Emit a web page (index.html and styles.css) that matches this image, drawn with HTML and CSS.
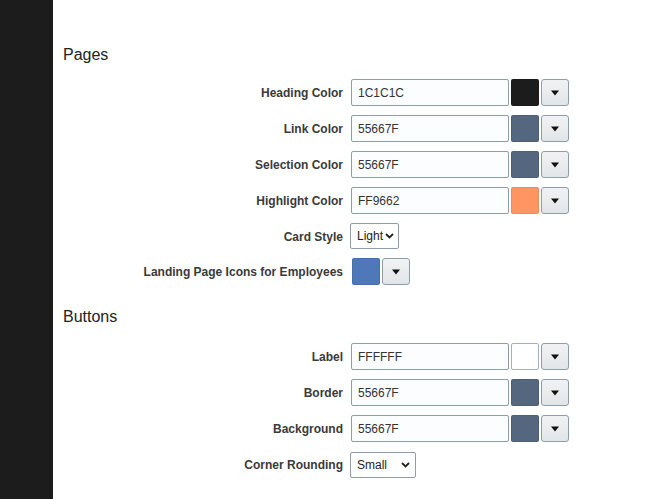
FILE: index.html
```html
<!DOCTYPE html>
<html>
<head>
<meta charset="utf-8">
<link rel="stylesheet" href="styles.css">
</head>
<body>
<div class="app">
  <aside class="sidebar"></aside>
  <main class="main">
    <h2 class="section-title first">Pages</h2>
    <div class="form">
      <label class="lbl">Heading Color</label>
      <div class="ctrl"><input class="hex" value="1C1C1C"><span class="swatch" style="background:#1c1c1c"></span><button class="drop"><svg width="10" height="6" viewBox="0 0 10 6"><path d="M1 0.5h8L5 5.5z" fill="#111"/></svg></button></div>
      <label class="lbl">Link Color</label>
      <div class="ctrl"><input class="hex" value="55667F"><span class="swatch" style="background:#55667f"></span><button class="drop"><svg width="10" height="6" viewBox="0 0 10 6"><path d="M1 0.5h8L5 5.5z" fill="#111"/></svg></button></div>
      <label class="lbl">Selection Color</label>
      <div class="ctrl"><input class="hex" value="55667F"><span class="swatch" style="background:#55667f"></span><button class="drop"><svg width="10" height="6" viewBox="0 0 10 6"><path d="M1 0.5h8L5 5.5z" fill="#111"/></svg></button></div>
      <label class="lbl">Highlight Color</label>
      <div class="ctrl"><input class="hex" value="FF9662"><span class="swatch" style="background:#ff9662"></span><button class="drop"><svg width="10" height="6" viewBox="0 0 10 6"><path d="M1 0.5h8L5 5.5z" fill="#111"/></svg></button></div>
      <label class="lbl short">Card Style</label>
      <div class="ctrl short"><div class="select w-light"><span>Light</span><svg width="9" height="6" viewBox="0 0 9 6"><path d="M1 1l3.5 3.5L8 1" fill="none" stroke="#222" stroke-width="1.8"/></svg></div></div>
      <label class="lbl">Landing Page Icons for Employees</label>
      <div class="ctrl"><span class="swatch solo" style="background:#4f78b9"></span><button class="drop"><svg width="10" height="6" viewBox="0 0 10 6"><path d="M1 0.5h8L5 5.5z" fill="#111"/></svg></button></div>
    </div>
    <h2 class="section-title second">Buttons</h2>
    <div class="form">
      <label class="lbl">Label</label>
      <div class="ctrl"><input class="hex" value="FFFFFF"><span class="swatch white" style="background:#ffffff"></span><button class="drop"><svg width="10" height="6" viewBox="0 0 10 6"><path d="M1 0.5h8L5 5.5z" fill="#111"/></svg></button></div>
      <label class="lbl">Border</label>
      <div class="ctrl"><input class="hex" value="55667F"><span class="swatch" style="background:#55667f"></span><button class="drop"><svg width="10" height="6" viewBox="0 0 10 6"><path d="M1 0.5h8L5 5.5z" fill="#111"/></svg></button></div>
      <label class="lbl">Background</label>
      <div class="ctrl"><input class="hex" value="55667F"><span class="swatch" style="background:#55667f"></span><button class="drop"><svg width="10" height="6" viewBox="0 0 10 6"><path d="M1 0.5h8L5 5.5z" fill="#111"/></svg></button></div>
      <label class="lbl">Corner Rounding</label>
      <div class="ctrl"><div class="select w-small"><span>Small</span><svg width="9" height="6" viewBox="0 0 9 6"><path d="M1 1l3.5 3.5L8 1" fill="none" stroke="#222" stroke-width="1.8"/></svg></div></div>
    </div>
  </main>
</div>
</body>
</html>
```
FILE: styles.css
```css
html, body {
  margin: 0;
  padding: 0;
  background: #ffffff;
  font-family: "Liberation Sans", Arial, sans-serif;
  color: #333333;
}
.app {
  display: flex;
  min-height: 499px;
}
.sidebar {
  width: 53px;
  flex: 0 0 53px;
  background: #1c1c1c;
}
.main {
  flex: 1;
  padding-left: 10px;
}
.section-title {
  margin: 0;
  font-size: 16px;
  line-height: 20px;
  font-weight: normal;
  color: #222222;
}
.section-title.first {
  margin-top: 45px;
  margin-bottom: 14px;
}
.section-title.second {
  margin-top: 22px;
  margin-bottom: 16px;
}
.form {
  display: grid;
  grid-template-columns: 280px auto;
  column-gap: 7px;
  row-gap: 9px;
  align-items: center;
}
.lbl {
  box-sizing: border-box;
  text-align: right;
  font-size: 12px;
  font-weight: bold;
  color: #3a3a3a;
  height: 27px;
  line-height: 27px;
  padding-top: 1px;
}
.ctrl {
  display: flex;
  align-items: center;
  gap: 2px;
  height: 27px;
}
.ctrl.short, .lbl.short { height: 26px; line-height: 26px; }
.hex {
  box-sizing: border-box;
  width: 158px;
  height: 27px;
  margin: 0 0 0 1px;
  padding: 0 6px;
  border: 1px solid #8e9cab;
  border-radius: 2px;
  background: #fbfdff;
  font-family: "Liberation Sans", Arial, sans-serif;
  font-size: 12px;
  color: #333333;
  outline: none;
}
.swatch {
  box-sizing: border-box;
  width: 28px;
  height: 27px;
  border: 1px solid rgba(0,0,0,0.08);
  border-radius: 2px;
  display: block;
}
.swatch.white { border-color: #a7b1bc; }
.swatch.solo { margin-left: 2px; }
.drop {
  box-sizing: border-box;
  width: 28px;
  height: 27px;
  margin: 0;
  padding: 0;
  border: 1px solid #8e9cab;
  border-radius: 3px;
  background: linear-gradient(#f1f2f3, #e2e5e8);
  display: flex;
  align-items: center;
  justify-content: center;
}
.drop svg { display: block; margin-top: 1px; }
.select {
  box-sizing: border-box;
  height: 26px;
  border: 1px solid #8e9cab;
  border-radius: 2px;
  background: #ffffff;
  display: flex;
  align-items: center;
  justify-content: space-between;
  padding: 0 6px 0 6px;
  font-size: 12px;
  color: #222222;
}
.w-light { width: 49px; padding-right: 4px; }
.w-small { width: 66px; padding-right: 5px; }
.select svg { display: block; }
```
